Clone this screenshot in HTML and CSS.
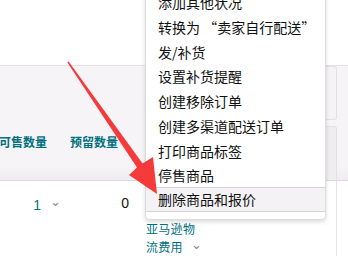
FILE: index.html
```html
<!DOCTYPE html>
<html lang="zh">
<head>
<meta charset="utf-8">
<link rel="stylesheet" href="styles.css">
</head>
<body>
<div class="page">
  <div class="top-space"></div>
  <div class="table">
    <div class="head-row">
      <div class="cell c1"><span class="col-title">可售数量</span></div>
      <div class="cell c2"><span class="col-title">预留数量</span></div>
      <div class="cell c3"></div>
      <div class="cell c4">
        <div class="side-box one"></div>
        <div class="side-box two"></div>
      </div>
    </div>
    <div class="body-row">
      <div class="cell c1"><span class="num link">1</span><span class="chev">&#x2304;</span></div>
      <div class="cell c2"><span class="num">0</span></div>
      <div class="cell c3">
        <div class="fee link">亚马逊物<br>流费用<span class="chev small">&#x2304;</span></div>
      </div>
      <div class="cell c4"></div>
    </div>
  </div>

  <ul class="menu">
    <li>添加其他状况</li>
    <li>转换为 “卖家自行配送”</li>
    <li>发/补货</li>
    <li>设置补货提醒</li>
    <li>创建移除订单</li>
    <li>创建多渠道配送订单</li>
    <li>打印商品标签</li>
    <li>停售商品</li>
    <li class="active">删除商品和报价</li>
  </ul>

  <svg class="arrow" width="348" height="256" viewBox="0 0 348 256">
    <polygon fill="#f43a3a" points="67.4,62.4 68.6,61.6 142.6,163.6 153,157 157,194 129,175 137,167.4"/>
  </svg>
</div>
</body>
</html>
```
FILE: styles.css
```css
html, body {
  margin: 0;
  padding: 0;
  background: #fff;
}
.page {
  position: relative;
  width: 348px;
  height: 256px;
  overflow: hidden;
  font-family: "Noto Sans CJK SC", "Noto Sans", sans-serif;
  color: #0f1111;
}
.top-space {
  height: 65px;
}
.table {
  display: flex;
  flex-direction: column;
}
.head-row {
  display: flex;
  height: 114px;
  background: linear-gradient(#f7f4f7 0, #f7f4f7 100px, #efedef 114px);
  border-top: 1px solid #e4e2e4;
  border-bottom: 1px solid #d9d9d9;
}
.body-row {
  display: flex;
  height: 76px;
}
.cell {
  box-sizing: border-box;
}
.c1 { width: 64px; }
.c2 { width: 70px; }
.c3 { width: 192px; }
.c4 { width: 11px; border-right: 1px solid #e3e3e3; }
.head-row .c4 {
  display: flex;
  flex-direction: column;
  gap: 6px;
  border-right: none;
}
.side-box {
  width: 11px;
  box-sizing: border-box;
  border: 1px solid #e2e0e2;
  border-left: none;
  border-radius: 0 3px 3px 0;
}
.side-box.one { height: 54px; background: #f6f3f6; }
.side-box.two { flex: 1; background: #efedef; border-bottom: none; border-radius: 0 3px 0 0; }
.col-title {
  display: block;
  font-size: 12px;
  font-weight: 700;
  color: #00707f;
  line-height: 16px;
  margin-top: 68px;
  white-space: nowrap;
}
.c2 .col-title { padding-left: 6px; }
.head-row .c1 .col-title { margin-left: -1px; }
.body-row .c1 {
  display: flex;
  justify-content: flex-end;
  align-items: flex-start;
  padding: 15px 3px 0 0;
  gap: 9px;
}
.body-row .c2 {
  display: flex;
  justify-content: flex-end;
  padding: 13px 5px 0 0;
}
.num {
  font-family: "Liberation Sans", Arial, sans-serif;
  font-size: 14px;
  line-height: 18px;
}
.link { color: #00707f; }
.chev {
  font-family: "DejaVu Sans", sans-serif;
  font-size: 13px;
  color: #888;
  line-height: 12px;
  margin-top: 0;
}
.body-row .c3 {
  padding: 39px 0 0 12px;
}
.fee {
  font-size: 12px;
  line-height: 18px;
  letter-spacing: 0.3px;
}
.chev.small {
  margin-left: 8px;
  position: relative;
  top: -3px;
}
.menu {
  position: absolute;
  left: 145px;
  top: -12px;
  width: 181px;
  margin: 0;
  padding: 0 0 7px 0;
  list-style: none;
  background: #fff;
  border: 1px solid #dcdcdc;
  border-radius: 0 0 4px 4px;
  box-shadow: 0 2px 4px rgba(0,0,0,0.14);
  box-sizing: border-box;
}
.menu li {
  height: 24.75px;
  line-height: 22.75px;
  padding: 2px 0 0 12px;
  font-size: 14px;
  white-space: nowrap;
  box-sizing: border-box;
}
.menu li.active {
  background: #f5f2f5;
  border-top: 1px solid #d5d5d5;
  border-bottom: 1px solid #d5d5d5;
  padding-top: 1px;
  line-height: 21.75px;
}
.arrow {
  position: absolute;
  left: 0;
  top: 0;
  pointer-events: none;
}
```
